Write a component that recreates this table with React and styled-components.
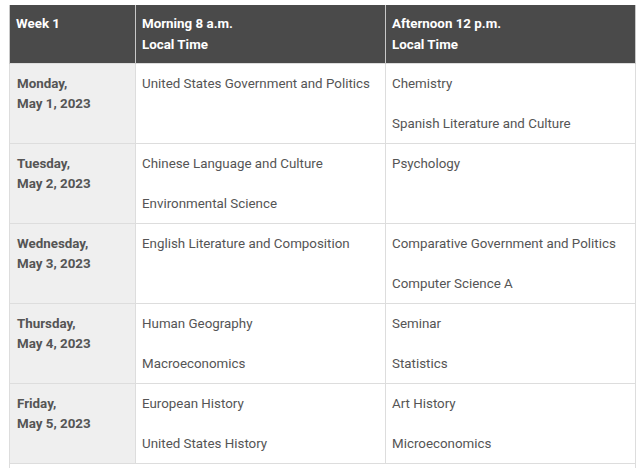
import React from 'react';
import styled, { createGlobalStyle } from 'styled-components';

const GlobalStyle = createGlobalStyle`
  body {
    margin: 0;
    background: #fff;
    font-family: Roboto, "Liberation Sans", sans-serif;
    overflow: hidden;
  }
`;

const Page = styled.div`
  padding: 5px 5px 0 9px;
  height: 468px;
  box-sizing: border-box;
  overflow: hidden;
`;

const Table = styled.table`
  width: 626px;
  border-collapse: collapse;
  table-layout: fixed;
  font-size: 13.35px;
  line-height: 20px;
  color: #555;
`;

const HeadCell = styled.th`
  background: #4a4a4a;
  color: #fff;
  font-weight: 700;
  text-align: left;
  vertical-align: top;
  padding: 8px 6px;
  line-height: 21px;
  border: 1px solid #c8c8c8;
  border-top: none;
  border-bottom: none;
`;

const DayCell = styled.td`
  background: #efefef;
  font-weight: 700;
  color: #555;
  vertical-align: top;
  padding: 10px 6px 9px 7px;
  border: 1px solid #ddd;
  height: 59px;
`;

const Cell = styled.td`
  vertical-align: top;
  padding: 10px 6px 9px;
  border: 1px solid #ddd;
`;

const Entry = styled.p`
  margin: 0;

  & + & {
    margin-top: 20px;
  }
`;

const FooterCell = styled.td`
  border: 1px solid #ddd;
  height: 40px;
`;

const schedule = [
  {
    day: 'Monday,',
    date: 'May 1, 2023',
    morning: ['United States Government and Politics'],
    afternoon: ['Chemistry', 'Spanish Literature and Culture'],
  },
  {
    day: 'Tuesday,',
    date: 'May 2, 2023',
    morning: ['Chinese Language and Culture', 'Environmental Science'],
    afternoon: ['Psychology'],
  },
  {
    day: 'Wednesday,',
    date: 'May 3, 2023',
    morning: ['English Literature and Composition'],
    afternoon: ['Comparative Government and Politics', 'Computer Science A'],
  },
  {
    day: 'Thursday,',
    date: 'May 4, 2023',
    morning: ['Human Geography', 'Macroeconomics'],
    afternoon: ['Seminar', 'Statistics'],
  },
  {
    day: 'Friday,',
    date: 'May 5, 2023',
    morning: ['European History', 'United States History'],
    afternoon: ['Art History', 'Microeconomics'],
  },
];

const Entries = ({ items }) => items.map((item) => <Entry key={item}>{item}</Entry>);

export default function App() {
  return (
    <Page>
      <GlobalStyle />
      <Table>
        <colgroup>
          <col style={{ width: 126 }} />
          <col style={{ width: 250 }} />
          <col style={{ width: 250 }} />
        </colgroup>
        <thead>
          <tr>
            <HeadCell>Week 1</HeadCell>
            <HeadCell>
              Morning 8 a.m.
              <br />
              Local Time
            </HeadCell>
            <HeadCell>
              Afternoon 12 p.m.
              <br />
              Local Time
            </HeadCell>
          </tr>
        </thead>
        <tbody>
          {schedule.map((row) => (
            <tr key={row.date}>
              <DayCell>
                {row.day}
                <br />
                {row.date}
              </DayCell>
              <Cell><Entries items={row.morning} /></Cell>
              <Cell><Entries items={row.afternoon} /></Cell>
            </tr>
          ))}
          <tr>
            <FooterCell colSpan={3} />
          </tr>
        </tbody>
      </Table>
    </Page>
  );
}
